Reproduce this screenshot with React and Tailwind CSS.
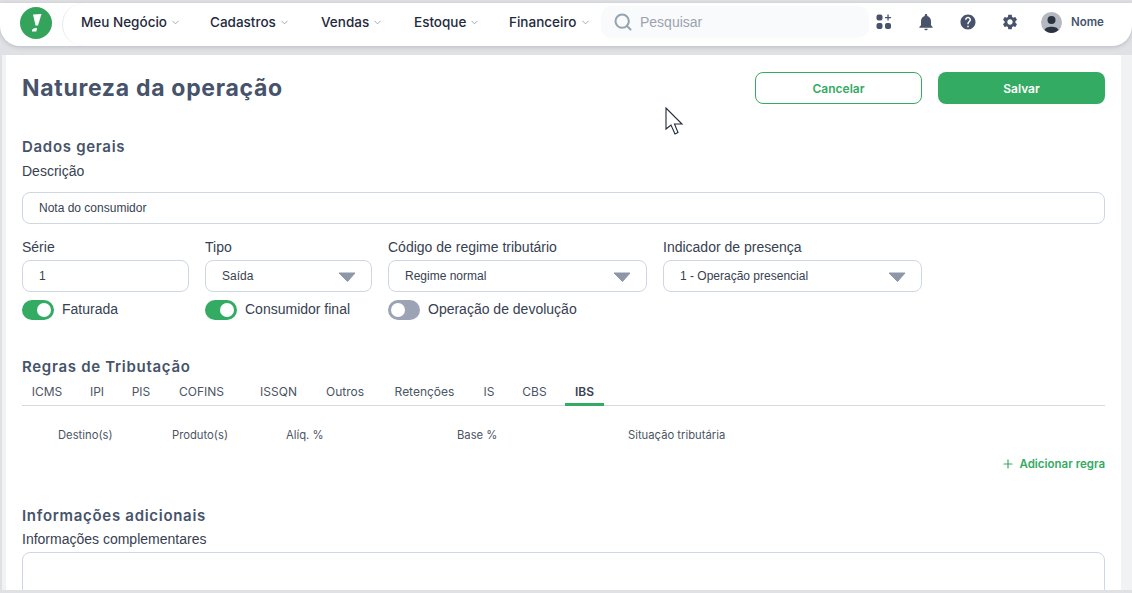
import React from "react";
import { ChevronDown, Search, Plus } from "lucide-react";
import { MdNotifications, MdHelp, MdSettings } from "react-icons/md";

const geo = "font-['Inter',sans-serif]";
const arial = "font-['Liberation_Sans',Arial,sans-serif]";

const menus = [
  { label: "Meu Negócio", w: "w-[129px]" },
  { label: "Cadastros", w: "w-[111px]" },
  { label: "Vendas", w: "w-[93px]" },
  { label: "Estoque", w: "w-[95px]" },
  { label: "Financeiro", w: "w-[92px]" },
];

const tabs = [
  { label: "ICMS", w: "w-[50px]" },
  { label: "IPI", w: "w-[34px]" },
  { label: "PIS", w: "w-[38px]" },
  { label: "COFINS", w: "w-[67px]" },
  { label: "ISSQN", w: "w-[57px] ml-[7px]" },
  { label: "Outros", w: "w-[60px]" },
  { label: "Retenções", w: "w-[83px]" },
  { label: "IS", w: "w-[30px]" },
  { label: "CBS", w: "w-[45px]" },
  { label: "IBS", w: "w-[39px]", active: true },
];

function Caret() {
  return (
    <svg width="18" height="10" viewBox="0 0 18 10" className="absolute right-[15px] top-[11px]">
      <path d="M1 1 L17 1 L9.5 9.5 Z" fill="#8e97a8" stroke="#8e97a8" strokeLinejoin="round" />
    </svg>
  );
}

function Field({ label, value, w, select }) {
  return (
    <div className={w}>
      <label className={`block text-[14px] leading-[16px] text-[#374151] ${arial}`}>{label}</label>
      <div className={`relative mt-[5px] h-[32px] rounded-[8px] border border-[#cfd6e4] bg-white pl-[16px] text-[12px] leading-[30px] text-[#374151] ${arial}`}>
        {value}
        {select && <Caret />}
      </div>
    </div>
  );
}

function Toggle({ on, label, w }) {
  return (
    <div className={`flex items-center gap-[8px] ${w}`}>
      <span className={`flex h-[20px] w-[32px] items-center rounded-full p-[3px] ${on ? "justify-end bg-[#34ab62]" : "justify-start bg-[#9ca3b4]"}`}>
        <span className="h-[14px] w-[14px] rounded-full bg-white" />
      </span>
      <span className={`text-[14px] text-[#374151] ${arial}`}>{label}</span>
    </div>
  );
}

function Logo() {
  return (
    <svg width="32" height="32" viewBox="0 0 32 32">
      <circle cx="16" cy="16" r="16" fill="#34a35c" />
      <path d="M13 7.5 L21.5 7 L18 18.5 L15.5 18.5 Z" fill="#fff" />
      <path d="M12 23 C13 21 16 21 17 21 L16.4 24.6 L12 24.6 Z" fill="#fff" />
    </svg>
  );
}

function AppsIcon() {
  return (
    <svg width="16" height="16" viewBox="0 0 16 16" fill="#46536a">
      <rect x="0.5" y="0.5" width="6" height="6" rx="2" />
      <rect x="0.5" y="9" width="6" height="6" rx="2" />
      <rect x="9" y="9" width="6" height="6" rx="2" />
      <path d="M11.4 0.5h1.3v2.4h2.4v1.3h-2.4v2.4h-1.3V4.2H9V2.9h2.4z" />
    </svg>
  );
}

function Avatar() {
  return (
    <svg width="21" height="21" viewBox="0 0 21 21">
      <circle cx="10.5" cy="10.5" r="10.5" fill="#b4b8c0" />
      <circle cx="10.5" cy="8" r="4" fill="#2b3240" />
      <path d="M3.5 18 C4.5 13.5 16.5 13.5 17.5 18 C15.5 20 13 21 10.5 21 C8 21 5.5 20 3.5 18 Z" fill="#2b3240" />
    </svg>
  );
}

function Cursor() {
  return (
    <svg width="20" height="30" viewBox="0 0 20 30" className="absolute left-[665px] top-[107px]">
      <path d="M1 1 L1 22 L6 18 L10 27 L13 25.5 L9.5 17 L17 17 Z" fill="#fff" stroke="#1f2937" strokeWidth="1.1" strokeLinejoin="miter" />
    </svg>
  );
}

function Header() {
  return (
    <nav className="flex h-[43px] items-stretch rounded-b-[20px] bg-white shadow-[0_1px_4px_rgba(60,70,90,0.25)]">
      <div className="flex w-[62px] shrink-0 items-center pb-[4px] pl-[20px]">
        <Logo />
      </div>
      <div className="flex min-w-0 flex-1 items-center rounded-l-[24px] border-l border-[#e8e9ec] pb-[5px]">
        <ul className="flex pl-[18px]">
          {menus.map((m) => (
            <li key={m.label} className={`flex items-center gap-[3px] text-[13.5px] font-medium text-[#1f2a3c] ${geo} ${m.w}`}>
              {m.label}
              <ChevronDown size={11} className="text-[#9aa3b2]" />
            </li>
          ))}
        </ul>
        <div className={`flex h-[32px] w-[268px] items-center gap-[7px] rounded-[10px] bg-[#f8fafc] pl-[12px] text-[14px] text-[#9ca3af] ${arial}`}>
          <Search size={20} strokeWidth={2.4} className="text-[#94a3b0]" />
          Pesquisar
        </div>
        <div className="ml-[7px] flex items-center text-[#46536a]">
          <span className="flex w-[16px] justify-center"><AppsIcon /></span>
          <span className="ml-[26px] flex w-[16px] justify-center"><MdNotifications size={20} className="shrink-0" /></span>
          <span className="ml-[26px] flex w-[16px] justify-center"><MdHelp size={18} className="shrink-0" /></span>
          <span className="ml-[26px] flex w-[16px] justify-center"><MdSettings size={18} className="shrink-0" /></span>
          <span className="ml-[23px]"><Avatar /></span>
          <span className={`ml-[9px] pt-[1px] text-[11.5px] font-semibold text-[#46536a] ${geo}`}>Nome</span>
        </div>
      </div>
    </nav>
  );
}

function Tabs() {
  return (
    <div className="mt-[7px] flex h-[22px] gap-[8px] border-b border-[#d5d9e0]">
      {tabs.map((t) => (
        <div
          key={t.label}
          className={`h-[22px] text-center text-[12px] leading-[16px] ${geo} ${t.w} ${t.active ? "border-b-[3px] border-[#34ab62] font-semibold text-[#374151]" : "text-[#4b5563]"}`}
        >
          {t.label}
        </div>
      ))}
    </div>
  );
}

export default function App() {
  return (
    <div className="relative h-[593px] w-[1132px] overflow-hidden bg-[#e0e1e4] pt-[3px]">
      <Header />
      <div className="ml-[2px] mt-[9px] h-[535px] bg-[#f1f2f4] pl-[4px] pr-[11px]">
        <main className="h-[535px] overflow-hidden bg-white px-[16px] pt-[17px]">
          <div className="flex h-[32px] items-center">
            <h1 className={`flex-1 text-[23px] font-bold tracking-[0.7px] text-[#46536a] ${geo}`}>Natureza da operação</h1>
            <button className={`h-[32px] w-[167px] rounded-[8px] border border-[#34ab62] bg-white pt-[1px] text-[12px] font-semibold text-[#34ab62] ${geo}`}>Cancelar</button>
            <button className={`ml-[16px] h-[32px] w-[167px] rounded-[8px] bg-[#34ab62] pt-[1px] text-[12px] font-semibold text-white ${geo}`}>Salvar</button>
          </div>

          <h2 className={`mt-[33px] text-[15px] font-semibold leading-[20px] tracking-[0.7px] text-[#46536a] ${geo}`}>Dados gerais</h2>
          <label className={`mt-[6px] block text-[14px] leading-[16px] text-[#374151] ${arial}`}>Descrição</label>
          <div className={`mt-[13px] h-[32px] rounded-[8px] border border-[#cfd6e4] pl-[16px] text-[12px] leading-[31px] text-[#374151] ${arial}`}>Nota do consumidor</div>

          <div className="mt-[15px] flex gap-[16px]">
            <Field label="Série" value="1" w="w-[167px]" />
            <Field label="Tipo" value="Saída" w="w-[167px]" select />
            <Field label="Código de regime tributário" value="Regime normal" w="w-[259px]" select />
            <Field label="Indicador de presença" value="1 - Operação presencial" w="w-[259px]" select />
          </div>
          <div className="mt-[7px] flex gap-[16px]">
            <Toggle on label="Faturada" w="w-[167px]" />
            <Toggle on label="Consumidor final" w="w-[167px]" />
            <Toggle label="Operação de devolução" />
          </div>

          <h2 className={`mt-[37px] text-[15px] font-semibold leading-[20px] tracking-[0.7px] text-[#46536a] ${geo}`}>Regras de Tributação</h2>
          <Tabs />

          <div className={`mt-[21px] flex pl-[36px] text-[11.25px] leading-[16px] text-[#4b5563] ${geo}`}>
            <span className="w-[114px]">Destino(s)</span>
            <span className="w-[114px]">Produto(s)</span>
            <span className="w-[171px]">Alíq. %</span>
            <span className="w-[171px]">Base %</span>
            <span>Situação tributária</span>
          </div>
          <div className={`mt-[13px] flex items-center justify-end gap-[4px] text-[11.5px] font-semibold leading-[16px] text-[#34ab62] ${geo}`}>
            <Plus size={14} />
            Adicionar regra
          </div>

          <h2 className={`mt-[34px] text-[15px] font-semibold leading-[20px] tracking-[0.7px] text-[#46536a] ${geo}`}>Informações adicionais</h2>
          <label className={`mt-[5px] block text-[14px] leading-[16px] text-[#374151] ${arial}`}>Informações complementares</label>
          <div className="mt-[5px] h-[60px] rounded-[8px] border border-[#cfd6e4]" />
        </main>
      </div>
      <Cursor />
    </div>
  );
}
